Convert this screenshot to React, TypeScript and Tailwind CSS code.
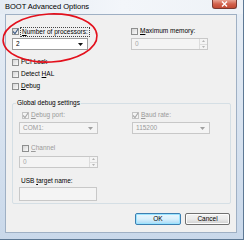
import React from "react";

type CbProps = { checked?: boolean; disabled?: boolean };
const Cb = ({ checked, disabled }: CbProps) => (
  <span
    className={
      disabled
        ? "w-[7px] h-[7px] shrink-0 border border-[#c4c4c4] bg-[#f4f4f4] flex items-center justify-center"
        : "w-[7px] h-[7px] shrink-0 border border-[#8e8f8f] bg-gradient-to-br from-[#d6d6d6] to-[#fafafa] flex items-center justify-center"
    }
  >
    {checked && (
      <svg width="7" height="7" viewBox="0 0 7 7" className="shrink-0">
        <path
          d="M1 3.5 L3 5.6 L6.2 0.8"
          fill="none"
          stroke={disabled ? "#a8a8a8" : "#3d5b85"}
          strokeWidth="1.1"
        />
      </svg>
    )}
  </span>
);

const Arrow = ({ disabled }: { disabled?: boolean }) => (
  <svg width="5" height="3" viewBox="0 0 5 3">
    <path d="M0 0 H5 L2.5 3 Z" fill={disabled ? "#a0a0a0" : "#111"} />
  </svg>
);

const Combo = ({ value, disabled, w }: { value: string; disabled?: boolean; w: string }) => (
  <div
    className={
      (disabled
        ? "border-[#c8c8c8] bg-[#f4f4f4] text-[#9a9a9a] "
        : "border-[#9c9c9c] bg-white text-black ") +
      w +
      " h-[12px] border flex items-center justify-between pl-[3px] pr-[4px]"
    }
  >
    <span className="leading-none">{value}</span>
    <Arrow disabled={disabled} />
  </div>
);

const Spin = ({ w }: { w: string }) => (
  <div className={w + " h-[12px] border border-[#c8c8c8] bg-[#f4f4f4] flex items-stretch text-[#a8a8a8]"}>
    <span className="flex-1 pl-[3px] flex items-center leading-none">0</span>
    <div className="w-[8px] flex flex-col border-l border-[#dcdcdc]">
      <div className="flex-1 flex items-center justify-center border-b border-[#dcdcdc]">
        <svg width="3" height="2" viewBox="0 0 3 2"><path d="M0 2 L1.5 0 L3 2 Z" fill="#b4b4b4" /></svg>
      </div>
      <div className="flex-1 flex items-center justify-center">
        <svg width="3" height="2" viewBox="0 0 3 2"><path d="M0 0 L1.5 2 L3 0 Z" fill="#b4b4b4" /></svg>
      </div>
    </div>
  </div>
);

const U = ({ children }: { children: React.ReactNode }) => (
  <span className="underline underline-offset-[1px] decoration-[0.5px]">{children}</span>
);

export default function App() {
  return (
    <div
      className="relative w-[244px] h-[240px] overflow-hidden bg-gradient-to-b from-[#e9eff6] to-[#c9d8ea] flex flex-col"
      style={{ fontFamily: '"Liberation Sans", Arial, sans-serif' }}
    >
      {/* Title bar */}
      <div className="h-[14px] shrink-0 flex items-start justify-between pl-[5px] pr-[7px] bg-gradient-to-r from-[#e4ebf3] via-[#f3f6fa] to-[#eef2f7]">
        <span className="text-[7.5px] leading-none mt-[3px] text-black">BOOT Advanced Options</span>
        <div className="w-[25px] h-[9px] rounded-b-[3px] border border-t-0 border-[#7a3a32] bg-gradient-to-b from-[#e8a393] via-[#d2614c] to-[#c24a33] flex items-center justify-center">
          <svg width="7" height="6" viewBox="0 0 7 6">
            <path d="M1 0.5 L6 5.5 M6 0.5 L1 5.5" stroke="#fff" strokeWidth="1.4" />
          </svg>
        </div>
      </div>

      {/* Body with frame */}
      <div className="flex-1 flex pl-[5px] pr-[7px] pb-[7px]">
        <div className="flex-1 border border-[#9fb0c4] bg-[#f0f0f0] text-[6.5px] leading-none text-black flex flex-col pl-[6px] pr-[5px] pt-[12px]">
          {/* Top two columns */}
          <div className="flex">
            <div className="w-[119px] flex flex-col">
              <div className="h-[9px] flex items-center gap-[1px]">
                <Cb checked />
                <span className="border border-dotted border-[#444] px-[1px] py-[0.5px] leading-[7px] whitespace-nowrap">
                  <U>N</U>umber of processors:
                </span>
              </div>
              <div className="mt-[2px]">
                <Combo value="2" w="w-[76px]" />
              </div>
            </div>
            <div className="flex flex-col">
              <div className="h-[9px] flex items-center gap-[2px]">
                <Cb />
                <span>
                  <U>M</U>aximum memory:
                </span>
              </div>
              <div className="mt-[2px]">
                <Spin w="w-[77px]" />
              </div>
            </div>
          </div>

          <div className="flex flex-col mt-[8px] gap-[4px]">
            <div className="h-[8px] flex items-center gap-[2px]">
              <Cb />
              <span>PCI Lock</span>
            </div>
            <div className="h-[8px] flex items-center gap-[2px]">
              <Cb />
              <span>
                Detect <U>H</U>AL
              </span>
            </div>
            <div className="h-[8px] flex items-center gap-[2px]">
              <Cb />
              <span>
                <U>D</U>ebug
              </span>
            </div>
          </div>

          {/* Group box */}
          <div className="relative mt-[13px] w-[219px] h-[101px] border border-[#d5dfe5] rounded-[2px] flex flex-col pl-[6px] pt-[7px]">
            <span className="absolute left-[3px] top-[-4px] bg-[#f0f0f0] px-[1px]">Global debug settings</span>
            <div className="flex">
              <div className="w-[113px] flex flex-col">
                <div className="h-[8px] flex items-center gap-[2px] pl-[3px]">
                  <Cb checked disabled />
                  <span className="text-[#9a9a9a]">
                    <U>D</U>ebug port:
                  </span>
                </div>
                <div className="mt-[3px]">
                  <Combo value="COM1:" disabled w="w-[79px]" />
                </div>
              </div>
              <div className="flex flex-col">
                <div className="h-[8px] flex items-center gap-[2px]">
                  <Cb checked disabled />
                  <span className="text-[#9a9a9a]">
                    <U>B</U>aud rate:
                  </span>
                </div>
                <div className="mt-[3px]">
                  <Combo value="115200" disabled w="w-[78px]" />
                </div>
              </div>
            </div>
            <div className="mt-[10px] h-[8px] flex items-center gap-[2px] pl-[3px]">
              <Cb />
              <span className="text-[#9a9a9a]">
                <U>C</U>hannel
              </span>
            </div>
            <div className="mt-[4px]">
              <Spin w="w-[79px]" />
            </div>
            <div className="mt-[10px] h-[7px] flex items-center pl-[2px] text-black">
              <span>
                USB <U>t</U>arget name:
              </span>
            </div>
            <div className="mt-[2px] w-[78px] h-[14px] border border-[#c8c8c8] bg-[#f4f4f4]" />
          </div>

          {/* Buttons */}
          <div className="flex justify-end gap-[4px] mt-[9px] pr-[1px]">
            <div className="w-[46px] h-[12px] rounded-[2px] border border-[#3c7fb1] shadow-[inset_0_0_0_1px_#9be4ff] bg-gradient-to-b from-[#eaf6fd] via-[#d9f0fc] to-[#a7d9f5] flex items-center justify-center">
              OK
            </div>
            <div className="w-[45px] h-[12px] rounded-[2px] border border-[#707070] shadow-[inset_0_0_0_1px_#fcfcfc] bg-gradient-to-b from-[#f2f2f2] via-[#ebebeb] to-[#cfcfcf] flex items-center justify-center">
              Cancel
            </div>
          </div>
        </div>
      </div>
      {/* bottom dark edge */}
      <div className="absolute left-0 right-0 bottom-0 h-[1px] bg-[#5d7894]" />
      <div className="absolute top-0 bottom-0 right-0 w-[1px] bg-[#5d7894]" />

      {/* red annotation ellipse */}
      <svg className="absolute left-0 top-0 pointer-events-none" width="244" height="240" viewBox="0 0 244 240">
        <ellipse cx="50" cy="38" rx="47" ry="24" fill="none" stroke="#e3101c" strokeWidth="1.6" transform="rotate(-3 50 38)" />
      </svg>
    </div>
  );
}
